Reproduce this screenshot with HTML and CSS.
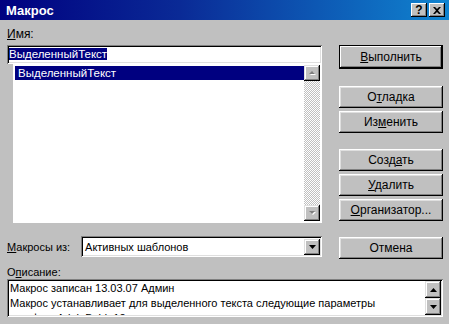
FILE: index.html
```html
<!DOCTYPE html>
<html>
<head>
    <title>Макрос</title>
    <link rel="stylesheet" href="styles.css">
</head>
<body>
    <div class="window">
        <div class="titlebar">
            <span class="title">Макрос</span>
            <div class="title-buttons">
                <span class="tbtn">?</span>
                <span class="tbtn close">
                    <svg width="8" height="7" viewBox="0 0 8 7"><path d="M0 0h2l2 2 2-2h2L5 3.5 8 7H6L4 5 2 7H0l3-3.5z" fill="#000"/></svg>
                </span>
            </div>
        </div>

        <div class="content">
            <div class="main">
                <div class="left">
                    <div class="label name-label"><u>И</u>мя:</div>
                    <div class="field name-field"><span class="sel">ВыделенныйТекст</span></div>
                    <div class="listbox">
                        <div class="items">
                            <div class="item selected">ВыделенныйТекст</div>
                        </div>
                        <div class="vscroll">
                            <div class="sbtn">
                                <svg width="7" height="4" viewBox="0 0 7 4"><path d="M1 4h6L4 1z" fill="#fff"/><path d="M0 3h6L3 0z" fill="#808080"/></svg>
                            </div>
                            <div class="track"></div>
                            <div class="sbtn">
                                <svg width="7" height="4" viewBox="0 0 7 4"><path d="M1 1h6L4 4z" fill="#fff"/><path d="M0 0h6L3 3z" fill="#808080"/></svg>
                            </div>
                        </div>
                    </div>
                    <div class="from-row">
                        <div class="label"><u>М</u>акросы из:</div>
                        <div class="field combo">
                            <span class="combo-text">Активных шаблонов</span>
                            <div class="sbtn">
                                <svg width="7" height="4" viewBox="0 0 7 4"><path d="M0 0h7L3.5 4z" fill="#000"/></svg>
                            </div>
                        </div>
                    </div>
                </div>

                <div class="right">
                    <button class="btn default"><u>В</u>ыполнить</button>
                    <div class="group">
                        <button class="btn">О<u>т</u>ладка</button>
                        <button class="btn">Из<u>м</u>енить</button>
                    </div>
                    <div class="group">
                        <button class="btn">Созд<u>а</u>ть</button>
                        <button class="btn"><u>У</u>далить</button>
                        <button class="btn"><u>О</u>рганизатор...</button>
                    </div>
                    <button class="btn">Отмена</button>
                </div>
            </div>

            <div class="label desc-label">О<u>п</u>исание:</div>
            <div class="field desc">
                <div class="desc-text">
                    Макрос записан 13.03.07 Админ<br>
                    Макрос устанавливает для выделенного текста следующие параметры<br>
                    шрифта: Arial, Bold, 12
                </div>
                <div class="vscroll">
                    <div class="sbtn">
                        <svg width="7" height="4" viewBox="0 0 7 4"><path d="M0 4h7L3.5 0z" fill="#000"/></svg>
                    </div>
                    <div class="sbtn">
                        <svg width="7" height="4" viewBox="0 0 7 4"><path d="M0 0h7L3.5 4z" fill="#000"/></svg>
                    </div>
                </div>
            </div>
        </div>
    </div>
</body>
</html>
```

FILE: styles.css
```css
body {
    margin: 0;
    background: #c0c0c0;
    font-family: 'Liberation Sans', Arial, sans-serif;
    font-size: 11px;
    color: #000;
}
.window {
    width: 449px;
    height: 324px;
    overflow: hidden;
    background: #c0c0c0;
}
.titlebar {
    height: 20px;
    display: flex;
    align-items: center;
    justify-content: space-between;
    padding: 0 4px 0 6px;
    background: linear-gradient(90deg, #000080 0%, #0a2a96 40%, #1084d0 100%);
}
.title {
    color: #fff;
    font-weight: bold;
    font-size: 13px;
}
.title-buttons {
    display: flex;
    gap: 2px;
}
.tbtn {
    width: 16px;
    height: 14px;
    box-sizing: border-box;
    background: #c0c0c0;
    box-shadow: inset -1px -1px #000, inset 1px 1px #fff, inset -2px -2px #808080;
    font-weight: bold;
    font-size: 12px;
    line-height: 14px;
    text-align: center;
    display: flex;
    align-items: center;
    justify-content: center;
}
.content {
    padding: 7px 6px 0 7px;
}
.main {
    display: flex;
    gap: 17px;
}
.left {
    width: 315px;
}
.name-label {
    height: 18px;
    line-height: 14px;
    font-size: 12px;
}
.field {
    background: #fff;
    box-sizing: border-box;
    box-shadow: inset 1px 1px #808080, inset -1px -1px #fff, inset 2px 2px #000, inset -2px -2px #dfdfdf;
}
.name-field {
    height: 19px;
    padding: 3px 2px 0 2px;
    line-height: 13px;
    font-size: 11.5px;
}
.sel {
    background: #000080;
    color: #fff;
}
.listbox {
    margin-left: 6px;
    height: 159px;
    display: flex;
    background: #fff;
    box-shadow: inset 0 -1px #fff, inset -1px 0 #fff;
}
.items {
    flex: 1;
    padding: 2px 0 0 2px;
}
.item {
    height: 14px;
    line-height: 14px;
    padding-left: 3px;
    font-size: 11.5px;
}
.item.selected {
    background: #000080;
    color: #fff;
}
.vscroll {
    width: 16px;
    display: flex;
    flex-direction: column;
}
.listbox .vscroll {
    margin: 1px 2px 2px 0;
}
.track {
    flex: 1;
    background-color: #c0c0c0;
    background-image: conic-gradient(#fff 25%, #c0c0c0 0 50%, #fff 0 75%, #c0c0c0 0);
    background-size: 2px 2px;
}
.sbtn {
    width: 16px;
    height: 16px;
    box-sizing: border-box;
    background: #c0c0c0;
    box-shadow: inset -1px -1px #000, inset 1px 1px #dfdfdf, inset -2px -2px #808080, inset 2px 2px #fff;
    display: flex;
    align-items: center;
    justify-content: center;
}
.from-row {
    display: flex;
    align-items: center;
    margin-top: 13px;
}
.from-row .label {
    width: 75px;
}
.combo {
    width: 244px;
    height: 21px;
    display: flex;
    align-items: center;
    padding: 2px;
}
.combo-text {
    flex: 1;
    padding-left: 2px;
}
.right {
    width: 104px;
    display: flex;
    flex-direction: column;
    gap: 16px;
    padding-top: 18px;
}
.group {
    display: flex;
    flex-direction: column;
    gap: 3px;
}
.btn {
    height: 22px;
    width: 104px;
    padding: 0;
    border: none;
    background: #c0c0c0;
    font-family: inherit;
    font-size: 12px;
    color: #000;
    box-shadow: inset -1px -1px #000, inset 1px 1px #fff, inset -2px -2px #808080, inset 2px 2px #dfdfdf;
}
.btn.default {
    height: 24px;
    margin-bottom: 1px;
    box-shadow: inset 0 0 0 1px #000, inset -2px -2px #000, inset 2px 2px #fff, inset -3px -3px #808080;
}
.desc-label {
    margin-top: 7px;
    height: 13px;
    line-height: 13px;
}
.desc {
    width: 436px;
    height: 38px;
    display: flex;
    padding: 2px;
}
.desc-text {
    flex: 1;
    padding: 0 0 0 1px;
    line-height: 15px;
    overflow: hidden;
}
.desc .sbtn {
    height: 17px;
}
```
